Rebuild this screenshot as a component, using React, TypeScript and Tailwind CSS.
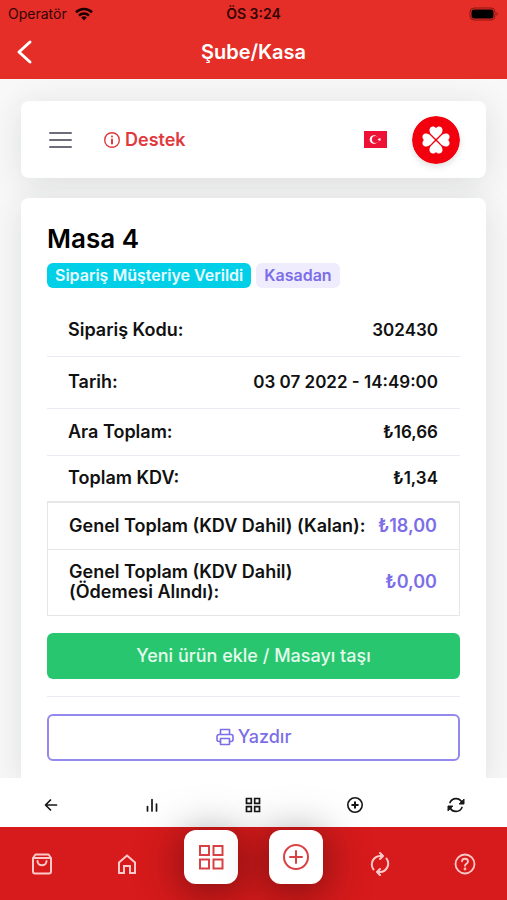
import type { ReactNode } from "react";

const stroke = {
  fill: "none",
  stroke: "currentColor",
  strokeWidth: 2,
  strokeLinecap: "round",
  strokeLinejoin: "round",
} as const;

const rows = [
  { label: "Sipariş Kodu:", value: "302430", cell: "h-[52px]" },
  { label: "Tarih:", value: "03 07 2022 - 14:49:00", cell: "h-[52px]" },
  { label: "Ara Toplam:", value: "₺16,66", cell: "h-[47px]" },
  { label: "Toplam KDV:", value: "₺1,34", cell: "h-[46px]" },
];

const totals = [
  { label: "Genel Toplam (KDV Dahil) (Kalan):", value: "₺18,00", cell: "h-[47px]" },
  { label: "Genel Toplam (KDV Dahil) (Ödemesi Alındı):", value: "₺0,00", cell: "h-[66px]" },
];

const pageActions: { label: string; icon: ReactNode }[] = [
  {
    label: "Geri",
    icon: (
      <svg width="16" height="16" viewBox="0 0 16 16" {...stroke} strokeWidth="1.7">
        <path d="M13.5 8H3M7.500 3 2.500 8l5 5" />
      </svg>
    ),
  },
  {
    label: "Raporlar",
    icon: (
      <svg width="16" height="16" viewBox="0 0 16 16" {...stroke} strokeWidth="1.7">
        <path d="M3.500 9.500V14M8 2.500V14M12.500 7V14" />
      </svg>
    ),
  },
  {
    label: "Masalar",
    icon: (
      <svg width="16" height="16" viewBox="0 0 16 16" {...stroke} strokeWidth="1.700" strokeLinejoin="miter">
        <path d="M1.500 1.500h4.800v4.800H1.500zM9.700 1.500h4.800v4.800H9.700zM1.500 9.700h4.800v4.800H1.500zM9.700 9.700h4.800v4.800H9.700z" />
      </svg>
    ),
  },
  {
    label: "Ekle",
    icon: (
      <svg width="18" height="18" viewBox="0 0 18 18" {...stroke} strokeWidth="1.6">
        <circle cx="9" cy="9" r="7.2" />
        <path d="M9 6.200v5.600M6.200 9h5.600" strokeWidth="2" />
      </svg>
    ),
  },
  {
    label: "Yenile",
    icon: (
      <svg width="20" height="18" viewBox="0 0 20 18" {...stroke} strokeWidth="1.7">
        <path d="M4 6.500A6.600 6.600 0 0 1 15.800 6M16 11.500A6.600 6.600 0 0 1 4.200 12" />
        <path d="M18 3.500V8h-4.500zM2 14.500V10h4.500z" fill="currentColor" strokeWidth="1" />
      </svg>
    ),
  },
];

const tabs: { label: string; raised?: boolean; icon: ReactNode }[] = [
  {
    label: "Siparişler",
    icon: (
      <svg width="24" height="24" viewBox="0 0 24 24" {...stroke}>
        <path d="M3 6 5.500 2.500h13L21 6v13.500a2 2 0 0 1-2 2H5a2 2 0 0 1-2-2zM3 6h18" />
        <path d="M7.500 9c0 5.600 9 5.600 9 0" />
      </svg>
    ),
  },
  {
    label: "Ana sayfa",
    icon: (
      <svg width="24" height="24" viewBox="0 0 24 24" {...stroke} strokeLinejoin="miter">
        <path d="M4 10.500 12 3.500l8 7V21h-5v-7H9v7H4z" />
      </svg>
    ),
  },
  {
    label: "Masalar",
    raised: true,
    icon: (
      <svg width="28" height="28" viewBox="0 0 28 28" {...stroke} strokeLinejoin="miter">
        <path d="M3 3h9v9H3zM16.500 3h9v9h-9zM3 16.500h9v9H3zM16.500 16.500h9v9h-9z" />
      </svg>
    ),
  },
  {
    label: "Yeni sipariş",
    raised: true,
    icon: (
      <svg width="28" height="28" viewBox="0 0 28 28" {...stroke}>
        <circle cx="14" cy="14" r="12" />
        <path d="M14 8v12M8 14h12" />
      </svg>
    ),
  },
  {
    label: "Yenile",
    icon: (
      <svg width="24" height="24" viewBox="0 0 24 24" {...stroke}>
        <path d="M5.500 17.500A8.500 8.500 0 0 1 12 4h2.500M12 1l3 3-3 3" />
        <path d="M18.500 6.500A8.500 8.500 0 0 1 12 20H9.500M12 17l-3 3 3 3" />
      </svg>
    ),
  },
  {
    label: "Yardım",
    icon: (
      <svg width="24" height="24" viewBox="0 0 24 24" {...stroke} strokeWidth="1.800">
        <circle cx="12" cy="12" r="9.500" />
        <path d="M9 9.300c.3-3.700 6-3.200 6 .2 0 2.200-3 2.200-3 4.300" />
        <circle cx="12" cy="17" r=".5" />
      </svg>
    ),
  },
];

function Header() {
  return (
    <header className="bg-[#e52e28] h-[79px]">
      <div className="grid grid-cols-3 items-center h-[27px] px-2 text-sm text-[#330404]">
        <div className="flex items-center gap-2">
          <span>Operatör</span>
          <svg width="18" height="14" viewBox="0 0 18 14" fill="none" stroke="#1a0000" strokeWidth="2.6">
            <path d="M1 5.300a11.500 11.500 0 0 1 16 0M4 8.600a7 7 0 0 1 10 0" />
            <path d="M6.200 10.500a4 4 0 0 1 5.600 0L9 13.500z" fill="#1a0000" stroke="none" />
          </svg>
        </div>
        <span className="text-center font-semibold">ÖS 3:24</span>
        <svg className="justify-self-end" width="30" height="14" viewBox="0 0 30 14">
          <rect x="1" y="1" width="25" height="12" rx="4" fill="none" stroke="#8d1512" />
          <rect x="2.500" y="2.500" width="22" height="9" rx="2.500" fill="#000" />
          <path d="M27.500 5v4c1.600-.6 1.600-3.400 0-4z" fill="#8d1512" />
        </svg>
      </div>
      <div className="grid grid-cols-[40px_1fr_40px] items-center h-[50px] px-2 text-white">
        <button aria-label="Geri" className="flex justify-center pr-2">
          <svg width="18" height="26" viewBox="0 0 18 26" {...stroke} strokeWidth="3">
            <path d="M15 3 4 13l11 10" />
          </svg>
        </button>
        <h1 className="text-center text-xl font-semibold">Şube/Kasa</h1>
      </div>
    </header>
  );
}

function Clover() {
  const leaf = "M0-1C-2.500-4-7-6-6.500-10.500-6-14-1.800-14.500 0-12 1.800-14.500 6-14 6.500-10.500 7-6 2.500-4 0-1z";
  return (
    <svg width="48" height="48" viewBox="0 0 48 48" className="rounded-full drop-shadow-md">
      <circle cx="24" cy="24" r="24" fill="#f2000d" />
      <g transform="translate(24 24)" fill="#fff">
        <path d={leaf} />
        <path d={leaf} transform="rotate(90)" />
        <path d={leaf} transform="rotate(180)" />
        <path d={leaf} transform="rotate(270)" />
      </g>
    </svg>
  );
}

function Navbar() {
  return (
    <nav className="flex items-center h-[77px] px-[26px] bg-white rounded-lg shadow-[0_5px_32px_rgba(34,41,47,0.12)]">
      <button aria-label="Menü" className="text-[#6e6b7b]">
        <svg width="28" height="28" viewBox="0 0 28 28" {...stroke}>
          <path d="M3 7h21M3 14h21M3 21h21" />
        </svg>
      </button>
      <a href="#destek" className="flex items-center gap-1 ml-7 text-lg font-semibold text-[#e0393e]">
        <svg width="18" height="18" viewBox="0 0 18 18" {...stroke} strokeWidth="1.400">
          <circle cx="9" cy="9" r="7.300" />
          <path d="M9 8.500v4" strokeWidth="2" />
          <circle cx="9" cy="5.500" r=".4" />
        </svg>
        Destek
      </a>
      <button aria-label="Türkçe" className="ml-auto mr-[25px]">
        <svg width="23" height="17" viewBox="0 0 23 17">
          <path d="M0 0h23v17H0z" fill="#ee1136" />
          <circle cx="10" cy="8.500" r="4.300" fill="#fff" />
          <circle cx="11.300" cy="8.500" r="3.400" fill="#ee1136" />
          <path d="m13.300 8.500 1.500-.5v-1.500l.9 1.200 1.400-.4-.8 1.200.8 1.200-1.400-.4-.9 1.200V9z" fill="#fff" />
        </svg>
      </button>
      <Clover />
    </nav>
  );
}

function OrderCard() {
  return (
    <section className="px-[26px] pt-[25px] pb-[17px] bg-white rounded-t-lg shadow-[0_5px_32px_rgba(34,41,47,0.12)]">
      <h2 className="text-[26px] leading-8 font-semibold text-black">Masa 4</h2>
      <div className="flex flex-wrap gap-[5px] mt-2 text-base leading-[25px] font-semibold">
        <span className="px-2 rounded-md bg-[#00cfe8] text-[#e6fbff]">Sipariş Müşteriye Verildi</span>
        <span className="px-2 rounded-md bg-[#eeecfd] text-[#7c6ee8]">Kasadan</span>
      </div>

      <table className="w-full mt-4 border-collapse text-lg leading-5 font-semibold text-[#111]">
        <tbody>
          {rows.map((row) => (
            <tr key={row.label} className="border-b border-[#ebe9f1] last:border-b-0">
              <th scope="row" className={`${row.cell} pl-[21px] text-left font-semibold`}>{row.label}</th>
              <td className={`${row.cell} pr-[22px] text-right text-[17px] whitespace-nowrap`}>{row.value}</td>
            </tr>
          ))}
        </tbody>
      </table>
      <table className="w-full border-collapse border border-t-2 border-[#e6e6e6] text-lg leading-5 font-semibold text-[#111]">
        <tbody>
          {totals.map((row) => (
            <tr key={row.label} className="border-b border-[#e6e6e6]">
              <th scope="row" className={`${row.cell} pl-[21px] text-left font-semibold`}>{row.label}</th>
              <td className={`${row.cell} pr-[22px] text-right text-lg whitespace-nowrap text-[#7c6ee8]`}>{row.value}</td>
            </tr>
          ))}
        </tbody>
      </table>

      <button className="block w-full h-[46px] mt-[17px] rounded-md bg-[#28c76f] text-lg font-medium text-[#e3faed]">
        Yeni ürün ekle / Masayı taşı
      </button>
      <hr className="my-[17px] border-[#ebe9f1]" />
      <button className="flex items-center justify-center gap-1 w-full h-[47px] rounded-md border-2 border-[#9388ed] text-lg font-medium text-[#7c6ee8]">
        <svg width="18" height="18" viewBox="0 0 18 18" {...stroke} strokeWidth="1.600">
          <path d="M4.500 6.500V1.500h9v5M4.500 13.500H3a2 2 0 0 1-2-2v-3a2 2 0 0 1 2-2h12a2 2 0 0 1 2 2v3a2 2 0 0 1-2 2h-1.500" />
          <path d="M4.500 10.500h9v6h-9z" />
        </svg>
        Yazdır
      </button>
    </section>
  );
}

function BottomBars() {
  return (
    <footer className="sticky bottom-0 z-10">
      <nav className="grid grid-cols-5 items-center h-[49px] pt-1 bg-white text-[#161616]">
        {pageActions.map((item) => (
          <button key={item.label} aria-label={item.label} className="flex items-center justify-center h-full">
            {item.icon}
          </button>
        ))}
      </nav>
      <nav className="grid grid-cols-6 h-[73px] bg-[#d71a1b]">
        {tabs.map((tab) =>
          tab.raised ? (
            <button
              key={tab.label}
              aria-label={tab.label}
              className="flex items-center justify-center justify-self-center size-[54px] mt-[3px] rounded-xl bg-white text-[#d94245] shadow-[0_6px_44px_rgba(0,0,0,0.5)]"
            >
              {tab.icon}
            </button>
          ) : (
            <button key={tab.label} aria-label={tab.label} className="flex items-center justify-center text-[#ffc9c9]">
              {tab.icon}
            </button>
          )
        )}
      </nav>
    </footer>
  );
}

export default function App() {
  return (
    <div className="min-h-screen flex flex-col bg-[#f8f8f8] font-['Inter',sans-serif]">
      <Header />
      <main className="flex-1 flex flex-col gap-5 px-[21px] pt-[22px]">
        <Navbar />
        <OrderCard />
      </main>
      <BottomBars />
    </div>
  );
}
